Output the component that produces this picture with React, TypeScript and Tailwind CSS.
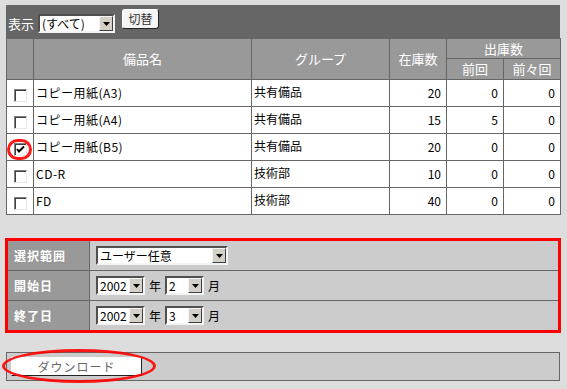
import type { ReactNode } from 'react';

const font = "font-['Noto_Sans_CJK_JP',sans-serif]";

function Select({ value, width }: { value: string; width: string }) {
  return (
    <div
      className={`${width} h-[19px] flex items-stretch bg-white border-2 border-t-[#505050] border-l-[#505050] border-b-[#f4f4f4] border-r-[#f4f4f4]`}
    >
      <span className="flex-1 pl-[2px] leading-[15px] text-[12px] text-black whitespace-nowrap overflow-hidden">
        {value}
      </span>
      <span className="w-[14px] flex items-center justify-center bg-[#d4d0c8] border border-t-[#f4f4f4] border-l-[#f4f4f4] border-b-[#404040] border-r-[#404040]">
        <svg width="7" height="4" viewBox="0 0 7 4">
          <path d="M0 0h7L3.5 4z" fill="#000" />
        </svg>
      </span>
    </div>
  );
}

function Check({ checked }: { checked?: boolean }) {
  return (
    <span className="inline-flex w-[13px] h-[13px] items-center justify-center bg-white border border-t-[#808080] border-l-[#808080] border-b-[#e8e8e8] border-r-[#e8e8e8] shadow-[inset_1px_1px_0_#404040]">
      {checked && (
        <svg width="9" height="9" viewBox="0 0 9 9">
          <path d="M1 4l2 2.5L8 1.5" stroke="#000" strokeWidth="2" fill="none" />
        </svg>
      )}
    </span>
  );
}

const rows = [
  { name: 'コピー用紙(A3)', group: '共有備品', stock: 20, prev: 0, prev2: 0 },
  { name: 'コピー用紙(A4)', group: '共有備品', stock: 15, prev: 5, prev2: 0 },
  { name: 'コピー用紙(B5)', group: '共有備品', stock: 20, prev: 0, prev2: 0, checked: true },
  { name: 'CD-R', group: '技術部', stock: 10, prev: 0, prev2: 0 },
  { name: 'FD', group: '技術部', stock: 40, prev: 0, prev2: 0 },
];

function FormRow({ label, children, last }: { label: string; children: ReactNode; last?: boolean }) {
  return (
    <div className={`flex h-[29px] box-content ${last ? '' : 'border-b border-[#666]'}`}>
      <div className="w-[82px] bg-[#999] border-r border-[#666] flex items-center pl-[6px] text-white font-bold text-[12px] tracking-[1px]">
        {label}
      </div>
      <div className="flex-1 bg-[#ccc] flex items-center gap-[4px] pl-[6px] text-[12px] text-black">
        {children}
      </div>
    </div>
  );
}

export default function App() {
  const th = 'border border-[#666] bg-[#999] text-white font-normal text-[13px]';
  const td = 'border border-[#666] bg-white h-[27px] text-[12px] text-black';
  return (
    <div className={`min-h-screen w-[567px] bg-[#ddd] pt-[5px] pl-[6px] ${font}`}>
      <div className="w-[554px]">
        <div className="h-[33px] bg-[#666] flex items-start">
          <span className="ml-[2px] mt-[11px] text-[13px] leading-[16px] text-white">表示</span>
          <div className="ml-[4px] mt-[9px]">
            <Select value="(すべて)" width="w-[77px]" />
          </div>
          <button className="ml-[7px] mt-[4px] w-[37px] h-[20px] rounded-[3px] bg-[#f4f4f4] border border-t-white border-l-white border-b-[#222] border-r-[#222] text-[12px] leading-[16px] text-[#333]">
            切替
          </button>
        </div>
        <table className="w-[554px] table-fixed border-collapse">
          <colgroup>
            <col className="w-[27px]" />
            <col className="w-[218px]" />
            <col className="w-[138px]" />
            <col className="w-[57px]" />
            <col className="w-[57px]" />
            <col className="w-[57px]" />
          </colgroup>
          <thead>
            <tr className="h-[20px]">
              <th rowSpan={2} className={th}></th>
              <th rowSpan={2} className={th}>備品名</th>
              <th rowSpan={2} className={th}>グループ</th>
              <th rowSpan={2} className={th}>在庫数</th>
              <th colSpan={2} className={`${th} leading-[18px]`}>出庫数</th>
            </tr>
            <tr className="h-[21px]">
              <th className={`${th} leading-[18px]`}>前回</th>
              <th className={`${th} leading-[18px]`}>前々回</th>
            </tr>
          </thead>
          <tbody>
            {rows.map((r) => (
              <tr key={r.name}>
                <td className={`${td} text-center`}>
                  <span className="relative inline-flex align-middle mt-[1px]">
                    <Check checked={r.checked} />
                    {r.checked && (
                      <span className="absolute left-[-7px] top-[-4px] w-[25px] h-[21px] rounded-full border-[3px] border-[#f00] opacity-90" />
                    )}
                  </span>
                </td>
                <td className={`${td} pl-[2px] tracking-[0.5px]`}>{r.name}</td>
                <td className={`${td} pl-[2px] align-top pt-[3px]`}>{r.group}</td>
                <td className={`${td} text-right pr-[5px]`}>{r.stock}</td>
                <td className={`${td} text-right pr-[5px]`}>{r.prev}</td>
                <td className={`${td} text-right pr-[5px]`}>{r.prev2}</td>
              </tr>
            ))}
          </tbody>
        </table>

        <div className="mt-[23px] ml-[-1px] w-[556px] border-[3px] border-[#f00]">
          <FormRow label="選択範囲">
            <Select value="ユーザー任意" width="w-[132px]" />
          </FormRow>
          <FormRow label="開始日">
            <Select value="2002" width="w-[49px]" />
            <span>年</span>
            <Select value="2" width="w-[39px]" />
            <span>月</span>
          </FormRow>
          <FormRow label="終了日" last>
            <Select value="2002" width="w-[49px]" />
            <span>年</span>
            <Select value="3" width="w-[39px]" />
            <span>月</span>
          </FormRow>
        </div>

        <div className="relative mt-[19px] h-[29px] bg-[#ccc] border border-[#666] flex items-center pl-[4px]">
          <button className="w-[131px] h-[19px] bg-white border border-t-white border-l-white border-b-[#222] border-r-[#222] text-[12px] leading-[16px] text-[#666] tracking-[1px]">
            ダウンロード
          </button>
          <span className="absolute left-[-5px] top-[-4px] w-[154px] h-[34px] rounded-[50%] border-[3px] border-[#f00] opacity-90" />
        </div>
      </div>
    </div>
  );
}
